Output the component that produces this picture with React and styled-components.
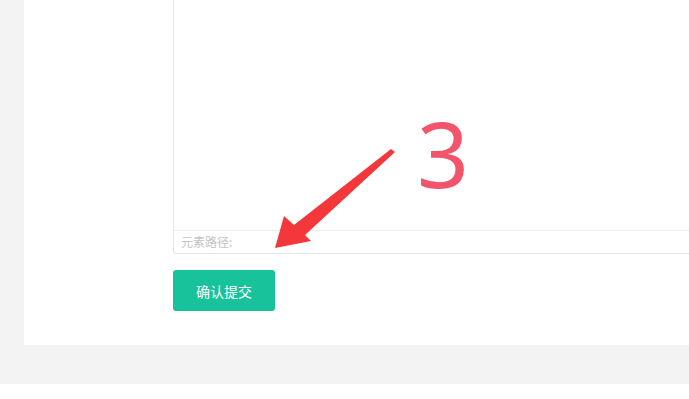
import React from "react";
import styled, { createGlobalStyle } from "styled-components";

const GlobalStyle = createGlobalStyle`
  html, body {
    margin: 0;
    padding: 0;
    background: #fff;
    overflow: hidden;
  }
  body {
    font-family: "Liberation Sans", "Noto Sans CJK SC", sans-serif;
  }
`;

const Page = styled.div`
  background: #f3f3f3;
  padding: 0 0 39px 24px;
`;

const Panel = styled.div`
  position: relative;
  background: #fff;
  padding: 0 0 34px 149px;
`;

// editor keeps going past the right edge of the window, so no right border
const Editor = styled.div`
  border: 1px solid #e6e6e6;
  border-top: none;
  border-right: none;
  border-radius: 0 0 0 3px;
`;

const EditArea = styled.div`
  height: 230px;
  border-bottom: 1px solid #ececec;
`;

const PathBar = styled.div`
  height: 22px;
  line-height: 22px;
  padding-left: 7px;
  font-size: 12px;
  color: #c4c4c4;
  font-family: "Noto Sans CJK SC", sans-serif;
`;

const SubmitButton = styled.button`
  margin-top: 16px;
  width: 102px;
  height: 41px;
  border: none;
  border-radius: 3px;
  background: #18c29b;
  color: #fff;
  font-size: 14px;
  font-family: "Noto Sans CJK SC", sans-serif;
  cursor: pointer;
`;

const StepNumber = styled.div`
  position: absolute;
  left: 393px;
  top: 97px;
  font-family: "Noto Sans", "Open Sans", sans-serif;
  font-weight: 400;
  font-size: 91px;
  line-height: 1.25;
  color: #f4546b;
`;

const ArrowMark = styled.svg`
  position: absolute;
  left: 0;
  top: 0;
  width: 689px;
  height: 399px;
  pointer-events: none;
`;

export default function App() {
  return (
    <>
      <GlobalStyle />
      <Page>
        <Panel>
          <Editor>
            <EditArea />
            <PathBar>元素路径:</PathBar>
          </Editor>
          <SubmitButton>确认提交</SubmitButton>
          <StepNumber>3</StepNumber>
        </Panel>
      </Page>
      <ArrowMark viewBox="0 0 689 399">
        <polygon
          points="275,248 284,216 294,225 391,149 395,152 305,235 311,241"
          fill="#f4373b"
        />
      </ArrowMark>
    </>
  );
}
